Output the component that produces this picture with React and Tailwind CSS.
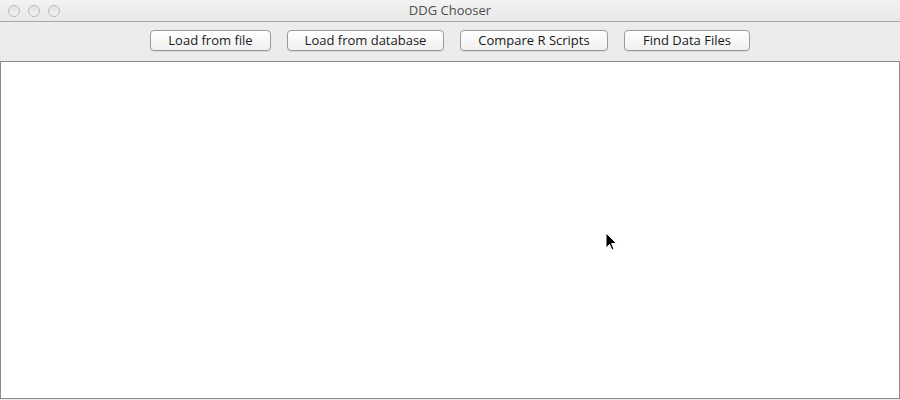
import React from "react";

const buttons = [
  { label: "Load from file", w: "w-[121px]" },
  { label: "Load from database", w: "w-[157px]" },
  { label: "Compare R Scripts", w: "w-[148px]" },
  { label: "Find Data Files", w: "w-[126px]" },
];

function Light() {
  return (
    <span className="block w-[12px] h-[12px] rounded-full border border-[#b9b9b9] bg-gradient-to-b from-[#e2e2e2] to-[#f4f4f4]" />
  );
}

export default function App() {
  return (
    <div
      className="relative w-[900px] h-[400px] bg-[#ececec] flex flex-col overflow-hidden"
      style={{ fontFamily: '"Lucida Grande", "Open Sans", "DejaVu Sans", sans-serif' }}
    >
      {/* title bar */}
      <div className="relative h-[22px] shrink-0 flex items-center justify-center bg-gradient-to-b from-[#f3f3f3] to-[#e8e8e8] border-b border-[#a8a8a8]">
        <div className="absolute left-[8px] top-[5px] flex gap-[8px]">
          <Light />
          <Light />
          <Light />
        </div>
        <span className="text-[13px] text-[#4d4d4d] leading-none">DDG Chooser</span>
      </div>

      {/* toolbar */}
      <div className="h-[39px] shrink-0 flex items-start justify-center gap-[16px] pt-[8px]">
        {buttons.map((b) => (
          <button
            key={b.label}
            type="button"
            className={`${b.w} h-[21px] rounded-[4px] border border-[#9a9a9a] bg-gradient-to-b from-[#ffffff] to-[#f0f0f0] text-[13px] text-[#1a1a1a] leading-none shadow-[0_1px_0_rgba(0,0,0,0.08)]`}
          >
            {b.label}
          </button>
        ))}
      </div>

      {/* content */}
      <div className="h-[338px] shrink-0 bg-white border border-[#8a8a8a]" />

      {/* cursor */}
      <svg className="absolute left-[605px] top-[232px]" width="14" height="20" viewBox="0 0 14 20">
        <path d="M1 1 L1 16 L4.5 12.5 L7 18 L9 17 L6.6 11.6 L11.5 11.5 Z" fill="#000" stroke="#fff" strokeWidth="1" />
      </svg>
    </div>
  );
}
